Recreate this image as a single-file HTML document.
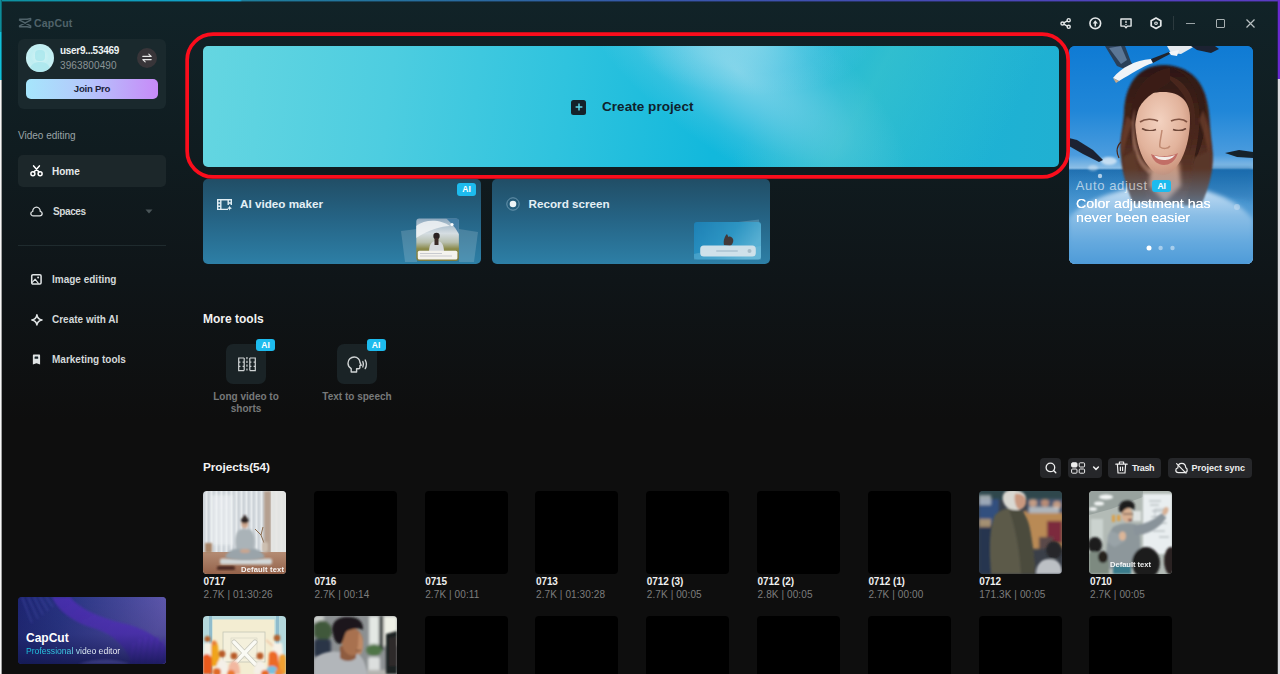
<!DOCTYPE html>
<html>
<head>
<meta charset="utf-8">
<title>CapCut</title>
<style>
*{box-sizing:border-box;margin:0;padding:0}
html,body{width:1280px;height:674px;overflow:hidden}
body{font-family:"Liberation Sans",sans-serif;color:#fff;position:relative;
background:linear-gradient(180deg,#112328 0px,#101c20 150px,#0f1518 280px,#0e0e0e 420px,#0e0e0e 674px);}
.a{position:absolute}
.b{font-weight:bold}
svg{position:absolute;overflow:visible}
/* frame strips */
#top{left:0;top:0;width:1280px;height:2px;background:linear-gradient(90deg,#0e909e 0,#0f9cb8 120px,#12a8d6 240px,#1d7f9c 242px,#2a6aa0 480px,#3758aa 650px,#4a48b8 1000px,#5b3cc4 1280px);}
#top2{left:0;top:1px;width:1280px;height:1px;background:rgba(16,30,36,.55)}
#lt{left:0;top:0;width:2px;height:79.5px;background:linear-gradient(90deg,#10c0d8 0,#10c0d8 55%,rgba(10,40,50,.85) 100%)}
#lt2{left:0;top:0;width:2px;height:32px;background:linear-gradient(90deg,#0d8c98 0,#0d8c98 55%,rgba(10,40,50,.85) 100%)}
#lb{left:0;top:79.5px;width:2px;height:595px;background:linear-gradient(90deg,#f6f6f6 0,#f6f6f6 55%,rgba(60,60,60,.8) 100%)}
#rt{left:1277px;top:0;width:3px;height:79px;background:linear-gradient(90deg,rgba(60,30,130,0) 0,rgba(80,35,170,.6) 30%,#6a2ad0 40%,#6a2ad0 100%)}
#rb{left:1277px;top:79px;width:3px;height:595px;background:linear-gradient(90deg,rgba(90,90,90,0) 0,rgba(150,150,150,.6) 30%,#dcdce0 40%,#dcdce0 100%)}
/* sidebar */
#logo{left:34px;top:16.5px;font-size:10.5px;font-weight:bold;color:#50636a;letter-spacing:.2px}
#ucard{left:18px;top:39px;width:148px;height:70px;border-radius:6px;background:#1a292d}
#avatar{left:26px;top:44px;width:28px;height:28px;border-radius:50%;background:radial-gradient(circle at 50% 45%,#d9f4f6 0,#bfeef2 45%,#c9f0f3 70%,#e9fafa 100%);overflow:hidden}
#uname{left:60px;top:45px;font-size:10px;font-weight:bold;color:#eef2f3;letter-spacing:-.3px}
#uid{left:60px;top:59.5px;font-size:10px;color:#8b9497;letter-spacing:.1px}
#swap{left:137px;top:48px;width:20px;height:20px;border-radius:50%;background:#383539}
#joinpro{left:26px;top:79px;width:132px;height:20px;border-radius:5px;background:linear-gradient(90deg,#a6e6fc 0,#b4c8fb 45%,#c78af8 100%);color:#1c1f3a;font-size:9.6px;font-weight:bold;letter-spacing:-.25px;text-align:center;line-height:20px}
.sec{left:18px;font-size:10px;color:#9aa4a7}
#home{left:18px;top:155px;width:148px;height:32px;border-radius:5px;background:#1c272a}
.nav{font-size:10px;font-weight:bold;color:#e6eaeb}
#sep{left:18px;top:245px;width:148px;height:1px;background:#1f2b2e}
#promo{left:18px;top:597px;width:148px;height:67px;border-radius:4px;overflow:hidden;background:linear-gradient(100deg,#1a1f66 0,#27307c 40%,#4a4a9c 75%,#5f57a8 100%)}

/* main */
#banner{left:203px;top:46px;width:856px;height:121px;border-radius:5px;overflow:hidden;
background:
linear-gradient(118deg,rgba(60,200,200,0) 64%,rgba(70,200,200,.5) 75%,rgba(60,196,204,.3) 84%,rgba(60,200,200,0) 92%),
linear-gradient(97deg,#65d6e1 0%,#4dcde0 22%,#2fc3de 42%,#12b8dc 60%,#1bb4d6 80%,#20b0d2 100%)}
#sheen{left:335px;top:-55px;width:400px;height:160px;transform:rotate(36deg);background:radial-gradient(ellipse closest-side,rgba(165,222,238,.72) 0,rgba(150,216,236,.5) 35%,rgba(130,210,232,.2) 70%,rgba(120,210,232,0) 100%)}
#sheen2{left:430px;top:-60px;width:240px;height:110px;background:radial-gradient(ellipse closest-side,rgba(176,226,240,.5) 0,rgba(150,216,236,.2) 60%,rgba(120,210,232,0) 100%)}
#redbox{left:185.3px;top:32.25px;width:884.7px;height:146.55px;border:3.7px solid #fb0d1c;border-radius:28px}
#cplus{left:571px;top:99.5px;width:15px;height:15px;border-radius:2.5px;background:#14222a}
#ctext{left:602px;top:99.2px;font-size:13.5px;font-weight:bold;color:#10222c;letter-spacing:.05px}
.card{top:179px;height:85px;border-radius:5px;background:linear-gradient(180deg,#214e66 0,#256384 45%,#2d7fa6 100%);overflow:hidden}
.ctitle{font-size:11.7px;font-weight:bold;color:#e4f0f6;top:197px}
.ai{width:19px;height:12.5px;border-radius:3px;background:#1dbbee;color:#fff;font-size:8.5px;font-weight:bold;text-align:center;line-height:12.5px}
.h2{font-size:12px;font-weight:bold;color:#f2f2f2}
.tile{top:344px;width:40px;height:40px;border-radius:7px;background:#1a2326}
.tlabel{font-size:10px;font-weight:bold;color:#77797a;text-align:center;line-height:12px;top:391px}
.btn{top:457.5px;height:20.5px;border-radius:4px;background:#26272a}
.btxt{font-size:9px;font-weight:bold;color:#eee;top:462.5px}
.th{width:83px;height:83px;border-radius:4px;background:#000;overflow:hidden}
.pt{font-size:10px;font-weight:bold;color:#efefef;letter-spacing:-.1px;margin-left:.6px}
.ps{font-size:10px;color:#7d7d7d;letter-spacing:.1px;margin-left:.6px}
#hero{left:1069px;top:46px;width:184px;height:218px;border-radius:6px;overflow:hidden;background:linear-gradient(180deg,#157fd6 0,#3a93dc 45%,#62a8e0 100%)}
</style>
</head>
<body>
<!-- frame -->
<div class="a" id="top"></div><div class="a" id="top2"></div>
<div class="a" id="lt"></div><div class="a" id="lt2"></div><div class="a" id="lb"></div>
<div class="a" id="rt"></div><div class="a" id="rb"></div>

<!-- SIDEBAR -->
<svg style="left:18px;top:18px" width="14" height="10" viewBox="0 0 14 10"><path d="M1.2 1.2H9.2L12.6 0.4V2.2L1.6 7.8V8.8H9.2L12.6 9.6V7.8L1.6 2.2V1.2" fill="none" stroke="#50636a" stroke-width="1.5" stroke-linejoin="round"/></svg>
<div class="a" id="logo">CapCut</div>
<div class="a" id="ucard"></div>
<div class="a" id="avatar"><svg style="left:0;top:0" width="28" height="28" viewBox="0 0 28 28"><rect x="9" y="6" width="10" height="11" rx="4" fill="#a8e6ec" opacity=".8"/><path d="M3 28C4 20 9 18 14 18S24 20 25 28Z" fill="#a8e6ec" opacity=".75"/></svg></div>
<div class="a" id="uname">user9...53469</div>
<div class="a" id="uid">3963800490</div>
<div class="a" id="swap"><svg style="left:5px;top:5px" width="10" height="10" viewBox="0 0 10 10"><path d="M0.8 3.4H9.2L6.8 1.2M9.2 6.6H0.8L3.2 8.8" fill="none" stroke="#e8e8e8" stroke-width="1.1" stroke-linecap="round" stroke-linejoin="round"/></svg></div>
<div class="a" id="joinpro">Join Pro</div>

<div class="a sec" style="top:130px">Video editing</div>
<div class="a" id="home"></div>
<div class="a nav" style="left:52px;top:165.8px">Home</div>
<div class="a nav" style="left:53px;top:205.6px;color:#d4d9da;letter-spacing:-.4px">Spaces</div>
<div class="a" id="sep"></div>
<div class="a nav" style="left:52px;top:273.7px;color:#d4d9da">Image editing</div>
<div class="a nav" style="left:52px;top:313.7px;color:#d4d9da">Create with AI</div>
<div class="a nav" style="left:52px;top:354px;color:#d4d9da">Marketing tools</div>

<div class="a" id="promo">
<svg style="left:0;top:0" width="148" height="67" viewBox="0 0 148 67">
<defs><linearGradient id="pg" x1="0" y1="0" x2="1" y2=".25"><stop offset="0" stop-color="#1d2470"/><stop offset=".35" stop-color="#2a3684"/><stop offset=".7" stop-color="#46489a"/><stop offset="1" stop-color="#625aae"/></linearGradient>
<linearGradient id="pd" x1="0" y1="0" x2="0" y2="1"><stop offset="0" stop-color="#141a58" stop-opacity="0"/><stop offset=".55" stop-color="#141a58" stop-opacity=".25"/><stop offset="1" stop-color="#12164e" stop-opacity=".85"/></linearGradient>
<linearGradient id="pr" x1="0" y1="0" x2="1" y2="1"><stop offset="0" stop-color="#4a2cb0"/><stop offset=".5" stop-color="#5a34c4"/><stop offset="1" stop-color="#5a30c8"/></linearGradient></defs>
<rect width="148" height="67" fill="url(#pg)"/>
<g filter="url(#f1)">
<path d="M34 0C40 14 56 26 78 32C96 38 108 50 114 67H148V50C140 40 124 30 104 26C80 20 62 12 52 0Z" fill="url(#pr)" opacity=".85"/>
<path d="M4 0L14 26M10 0L20 22M16 0L25 18M22 0L30 14M28 0L35 10" stroke="#3c44a0" stroke-width="1.6" opacity=".7"/>
<path d="M112 67L116 46M118 67L122 42M124 67L128 40M130 67L134 40M136 67L140 40M142 67L146 42" stroke="#6a3ad8" stroke-width="2.2" opacity=".75"/>
</g>
<rect width="148" height="67" fill="url(#pd)"/>
<path d="M60 67C80 60 100 62 112 67Z" fill="#4a4a90" opacity=".6" filter="url(#f1)"/>
</svg>
<div class="a" style="left:8px;top:33.5px;font-size:12px;font-weight:bold;color:#fff">CapCut</div>
<div class="a" style="left:8px;top:48.5px;font-size:8.6px;white-space:nowrap;background:linear-gradient(90deg,#18c4e0 0,#3fd0e6 45%,#e8f6fa 60%,#fff 100%);-webkit-background-clip:text;background-clip:text;color:transparent">Professional video editor</div>
</div>


<!-- nav icons -->
<svg style="left:30px;top:165px" width="13" height="12" viewBox="0 0 13 12"><g fill="none" stroke="#fff" stroke-width="1.5" stroke-linecap="round"><circle cx="2.9" cy="8.7" r="2"/><circle cx="10.1" cy="8.7" r="2"/><path d="M3.6 0.9L9 7M9.4 0.9L4 7"/></g></svg>
<svg style="left:30px;top:205.5px" width="13" height="11.2" viewBox="0 0 14 12"><path d="M3.6 10.6C1.9 10.6 0.9 9.4 0.9 8.1C0.9 6.9 1.8 6 2.9 5.8C3 3.3 4.7 1.1 7 1.1C9.3 1.1 11 3.3 11.1 5.8C12.2 6 13.1 6.9 13.1 8.1C13.1 9.4 12.1 10.6 10.4 10.6Z" fill="none" stroke="#dfe3e4" stroke-width="1.4" stroke-linejoin="round"/></svg>
<svg style="left:144.5px;top:208.5px" width="8" height="5" viewBox="0 0 8 5"><path d="M0.5 0.5H7.5L4 4.5Z" fill="#4a5558"/></svg>
<svg style="left:31.2px;top:273.6px" width="10.8" height="10.8" viewBox="0 0 12 12"><rect x="0.8" y="0.8" width="10.4" height="10.4" rx="1.4" fill="none" stroke="#dfe3e4" stroke-width="1.7"/><circle cx="7.9" cy="4" r="1.1" fill="#dfe3e4"/><path d="M1.2 9.6L4.6 5.8L8.4 10.6" fill="none" stroke="#dfe3e4" stroke-width="1.3" stroke-linejoin="round"/></svg>
<svg style="left:30.6px;top:313.8px" width="11.8" height="11.8" viewBox="0 0 13 13"><path d="M6.5 0.9C7 4.2 8.8 6 12.1 6.5C8.8 7 7 8.8 6.5 12.1C6 8.8 4.2 7 0.9 6.5C4.2 6 6 4.2 6.5 0.9Z" fill="none" stroke="#dfe3e4" stroke-width="1.7" stroke-linejoin="round"/></svg>
<svg style="left:32.4px;top:353.8px" width="8.6" height="11.2" viewBox="0 0 10 12" preserveAspectRatio="none"><path d="M1 1.6C1 1 1.5 0.5 2.1 0.5H8.4C9 0.5 9.4 1 9.4 1.6V11.3L5.2 9.9L1 11.3Z" fill="#dfe3e4"/><rect x="3" y="2.6" width="4.2" height="2.6" rx=".5" fill="#142126"/></svg>

<!-- TOPBAR -->
<svg style="left:1059.8px;top:17.9px" width="11.2" height="11" viewBox="0 0 12 12"><g fill="none" stroke="#e4e8e9" stroke-width="1.5"><circle cx="2.6" cy="6" r="1.7"/><circle cx="9.4" cy="2.4" r="1.7"/><circle cx="9.4" cy="9.6" r="1.7"/><path d="M4.1 5.2L7.9 3.2M4.1 6.8L7.9 8.8"/></g></svg>
<svg style="left:1089.2px;top:16.7px" width="12.6" height="12.6" viewBox="0 0 12 12"><circle cx="6" cy="6" r="5.1" fill="none" stroke="#e4e8e9" stroke-width="1.55"/><path d="M6 9V4.4" stroke="#e4e8e9" stroke-width="1.5"/><path d="M3.6 6.2L6 3.2L8.4 6.2Z" fill="#e4e8e9"/></svg>
<svg style="left:1119.7px;top:17.8px" width="12" height="11.6" viewBox="0 0 13 13" preserveAspectRatio="none"><path d="M1 1.1H12V9.1H8L6.5 10.9L5 9.1H1Z" fill="none" stroke="#e4e8e9" stroke-width="1.55" stroke-linejoin="round"/><path d="M6.5 3V5.6" stroke="#e4e8e9" stroke-width="1.4"/><circle cx="6.5" cy="7.2" r=".8" fill="#e4e8e9"/></svg>
<svg style="left:1150px;top:16.9px" width="12" height="12.5" viewBox="0 0 13 14" preserveAspectRatio="none"><path d="M6.5 1.2L11.7 4.1V9.9L6.5 12.8L1.3 9.9V4.1Z" fill="none" stroke="#e4e8e9" stroke-width="1.9" stroke-linejoin="round"/><circle cx="6.5" cy="7" r="1.4" fill="none" stroke="#e4e8e9" stroke-width="1.3"/></svg>
<div class="a" style="left:1173px;top:16px;width:1px;height:14px;background:#2c3a3e"></div>
<div class="a" style="left:1186px;top:22.6px;width:9px;height:1.2px;background:#9aa3a6"></div>
<div class="a" style="left:1216px;top:19px;width:9px;height:9px;border:1.2px solid #a8b0b2;border-radius:1px"></div>
<svg style="left:1246px;top:18.5px" width="9" height="9" viewBox="0 0 9 9"><path d="M0.5 0.5L8.5 8.5M8.5 0.5L0.5 8.5" stroke="#b8c0c2" stroke-width="1.2"/></svg>


<!-- MAIN -->
<div class="a" id="hero">
<svg style="left:0;top:0" width="184" height="218" viewBox="0 0 184 218">
<defs>
<linearGradient id="sky" x1="0" y1="0" x2="0" y2="1"><stop offset="0" stop-color="#0f7bd4"/><stop offset=".3" stop-color="#2187d8"/><stop offset=".5" stop-color="#4b9cde"/><stop offset=".56" stop-color="#8dbfe6"/><stop offset=".57" stop-color="#1f6fb0"/><stop offset=".68" stop-color="#2a7fc0"/><stop offset="1" stop-color="#4f9cd8"/></linearGradient>
<linearGradient id="ov" x1="0" y1="0" x2="0" y2="1"><stop offset="0" stop-color="#5aa4dc" stop-opacity="0"/><stop offset=".56" stop-color="#5aa4dc" stop-opacity="0"/><stop offset=".68" stop-color="#66aade" stop-opacity=".35"/><stop offset=".78" stop-color="#66aade" stop-opacity=".72"/><stop offset=".9" stop-color="#5ba4dc" stop-opacity=".93"/><stop offset="1" stop-color="#4e9bd8" stop-opacity="1"/></linearGradient>
<linearGradient id="hairg" x1="0" y1="0" x2="0" y2="1"><stop offset="0" stop-color="#2c1712"/><stop offset=".5" stop-color="#4a271c"/><stop offset="1" stop-color="#6b4434"/></linearGradient>
<radialGradient id="skin" cx=".45" cy=".35" r=".7"><stop offset="0" stop-color="#f3d2c0"/><stop offset=".6" stop-color="#e2b39c"/><stop offset="1" stop-color="#c48c74"/></radialGradient>
<filter id="b1" x="-20%" y="-20%" width="140%" height="140%"><feGaussianBlur stdDeviation="1"/></filter>
<filter id="b2" x="-20%" y="-20%" width="140%" height="140%"><feGaussianBlur stdDeviation="2"/></filter>
<filter id="b05" x="-20%" y="-20%" width="140%" height="140%"><feGaussianBlur stdDeviation=".6"/></filter>
</defs>
<rect width="184" height="218" fill="url(#sky)"/>
<path d="M120 122H184V156C160 150 140 150 120 152Z" fill="#1868aa" opacity=".75" filter="url(#b2)"/>
<!-- clouds/lights -->
<ellipse cx="40" cy="115" rx="8" ry="4" fill="#dbeaf6" opacity=".8" filter="url(#b1)"/>
<ellipse cx="24" cy="122" rx="5" ry="3" fill="#dbeaf6" opacity=".5" filter="url(#b1)"/>
<!-- gull 1 -->
<g filter="url(#b05)">
<path d="M36 0L56 0L62 16L66 22L58 24L48 20Z" fill="#2c3f58"/>
<path d="M40 2L52 0L58 14L52 18Z" fill="#5b7796"/>
<path d="M44 32C52 22 66 14 82 13L84 17C74 20 62 28 50 35Z" fill="#f1f4f7"/>
<path d="M82 13L100 6L101 8L84 17Z" fill="#20242c"/>
<path d="M44 32L50 35L47 37Z" fill="#c9a98a"/>
</g>
<!-- gull 2 -->
<g filter="url(#b05)">
<path d="M98 0H126L112 8L102 7Z" fill="#e4e9ee"/>
<path d="M100 6L110 4L108 10L102 9Z" fill="#f3f5f7"/>
<path d="M122 0H146L150 3L142 7L128 4Z" fill="#1c2430"/>
</g>
<!-- dark wings -->
<path d="M0 92L8 94L24 104L34 114L30 116L14 108L0 100Z" fill="#1b2430" filter="url(#b05)"/>
<path d="M156 107L170 104L184 106V112L168 111Z" fill="#16202c" filter="url(#b05)"/>
<!-- blouse -->
<path d="M0 218V172C14 156 40 146 70 141L120 141C150 146 172 158 184 174V218Z" fill="#e2eefa" filter="url(#b2)"/>
<!-- hair back -->
<path d="M96 19C70 18 56 38 55 66C54 84 50 96 52 112C53 126 58 142 64 156L132 158C140 140 146 120 143 100C140 82 142 66 136 48C130 30 116 20 96 19Z" fill="url(#hairg)" filter="url(#b1)"/>
<!-- neck -->
<path d="M82 116H110L112 140L96 156L80 140Z" fill="#c99880" filter="url(#b2)"/>
<!-- face -->
<path d="M66 70C66 54 76 46 94 46C112 46 121 56 121 72C121 86 119 100 112 114C106 124 100 129 94 129C87 129 80 123 74 112C68 100 66 84 66 70Z" fill="url(#skin)" filter="url(#b05)"/>
<!-- hair front strands -->
<path d="M101 22C84 24 66 38 62 64C61 76 60 88 62 100C66 84 66 72 70 62C76 50 90 44 101 36Z" fill="#3a1f17" filter="url(#b05)"/>
<path d="M101 22C116 26 128 40 130 62C132 80 128 100 124 118C132 104 138 84 136 62C134 40 122 24 101 22Z" fill="#341b14" filter="url(#b05)"/>
<path d="M101 34C110 42 120 52 122 72C124 86 122 98 120 108C126 92 128 72 124 56C120 42 112 34 101 30Z" fill="#4a281c" filter="url(#b05)"/>
<path d="M58 70C54 84 50 96 54 110C56 96 60 86 64 76Z" fill="#6b3d2a" opacity=".8" filter="url(#b1)"/>
<path d="M134 64C140 80 144 96 140 112C138 98 134 84 130 74Z" fill="#6b3d2a" opacity=".8" filter="url(#b1)"/>
<path d="M52 96C48 100 47 106 50 112" stroke="#4a281c" stroke-width="1.2" fill="none" filter="url(#b05)"/>
<path d="M66 62C64 80 66 100 72 112C76 118 80 122 84 124L80 128C72 122 66 112 64 100C62 88 62 74 66 62Z" fill="#c99a84" opacity=".5" filter="url(#b1)"/>
<!-- brows, eyes -->
<path d="M71 76C76 72.5 84 72.5 89 75" stroke="#6f4232" stroke-width="1.7" fill="none" opacity=".85" filter="url(#b05)"/>
<path d="M102 75C107 72.5 114 72.5 118 76" stroke="#6f4232" stroke-width="1.7" fill="none" opacity=".85" filter="url(#b05)"/>
<path d="M73 82.5C77 85 83 85 87 83.5" stroke="#5a3428" stroke-width="1.5" fill="none" opacity=".85" filter="url(#b05)"/>
<path d="M104 83.5C108 85 113 85 117 82.5" stroke="#5a3428" stroke-width="1.5" fill="none" opacity=".85" filter="url(#b05)"/>
<!-- nose -->
<path d="M93 84C92 92 90 98 91 101C94 103 99 103 101 100" stroke="#c08a72" stroke-width="1.5" fill="none" filter="url(#b05)"/>
<!-- mouth -->
<path d="M82 108C88 111 102 111 109 107C106 116 100 119 95 119C89 119 84 115 82 108Z" fill="#c26e66" filter="url(#b05)"/>
<path d="M85 109.5C91 111.5 101 111.5 106 109C103 113 99 114 95 114C91 114 87 112.5 85 109.5Z" fill="#f4ece8"/>
<!-- hair lower fade -->
<path d="M54 112C56 130 60 146 66 160L78 150C72 138 68 124 66 104Z" fill="#5f3a2c" opacity=".9" filter="url(#b1)"/>
<path d="M124 112C124 130 120 146 114 160L132 158C140 140 144 124 142 104Z" fill="#5a382c" opacity=".9" filter="url(#b1)"/>
<!-- overlay -->
<rect width="184" height="218" fill="url(#ov)"/>
<!-- bokeh -->
<circle cx="31" cy="130" r="2.2" fill="#cfe2f3" opacity=".8"/>
<circle cx="168" cy="161" r="3" fill="#cfe2f3" opacity=".5" filter="url(#b05)"/>
<circle cx="80" cy="202" r="2.5" fill="#fff"/>
<circle cx="91.6" cy="202" r="2.2" fill="#fff" opacity=".45"/>
<circle cx="103.5" cy="202" r="2.2" fill="#fff" opacity=".45"/>
</svg>
<div class="a" style="left:6.8px;top:132.4px;font-size:13px;letter-spacing:.62px;color:rgba(255,255,255,.62);white-space:nowrap">Auto adjust</div>
<div class="a ai" style="left:83px;top:133.8px;width:19.4px;height:12.2px;line-height:12.2px">AI</div>
<div class="a" style="left:6.8px;top:152.4px;font-size:12.5px;line-height:13.3px;color:#fff;text-shadow:0 0 .6px rgba(255,255,255,.9);white-space:nowrap;transform:scaleX(1.14);transform-origin:0 0">Color adjustment has<br>never been easier</div>
</div>
<div class="a" id="banner"><div class="a" id="sheen"></div><div class="a" id="sheen2"></div></div>
<div class="a" id="cplus"><svg style="left:3.5px;top:3.5px" width="8" height="8" viewBox="0 0 8 8"><path d="M4 0.6V7.4M0.6 4H7.4" stroke="#59d3e6" stroke-width="1.5"/></svg></div>
<div class="a" id="ctext">Create project</div>

<div class="a card" id="card1" style="left:203px;width:278px"></div>
<div class="a card" id="card2" style="left:492px;width:278px"></div>
<div class="a ctitle" style="left:240px">AI video maker</div>
<div class="a ctitle" style="left:528.5px">Record screen</div>
<div class="a ai" style="left:457px;top:183px">AI</div>


<!-- card icons -->
<svg style="left:217px;top:198.5px" width="16" height="12" viewBox="0 0 16 12"><g fill="none" stroke="#e0edf3" stroke-width="1.4"><path d="M11 10.4H0.7V0.7H14.3V6"/><path d="M3.8 0.7V10.4M11.2 0.7V6"/><path d="M0.7 4H3.8M0.7 7.2H3.8M11.2 4H14.3"/></g><path d="M12.6 6.6C12.9 8.3 13.5 8.9 15.2 9.2C13.5 9.5 12.9 10.1 12.6 11.8C12.3 10.1 11.7 9.5 10 9.2C11.7 8.9 12.3 8.3 12.6 6.6Z" fill="#e0edf3"/></svg>
<svg style="left:506px;top:197px" width="14" height="14" viewBox="0 0 14 14"><circle cx="7" cy="7" r="6.2" fill="none" stroke="#7fa8bf" stroke-width="1" opacity=".75"/><circle cx="7" cy="7" r="3.3" fill="#eef4f7"/></svg>
<!-- card thumbs -->
<svg style="left:398px;top:214px" width="84" height="50" viewBox="0 0 84 50">
<path d="M3 17L19 15V48H7Z" fill="#fff" opacity=".16"/><path d="M61 15L80 18L76 48H61Z" fill="#fff" opacity=".16"/>
<defs><clipPath id="c1"><rect x="18.3" y="4.5" width="42.6" height="42.6" rx="3"/></clipPath><linearGradient id="g1" x1="0" y1="0" x2="0" y2="1"><stop offset="0" stop-color="#8aa6bc"/><stop offset=".35" stop-color="#d5dde2"/><stop offset=".55" stop-color="#b9c0b0"/><stop offset=".7" stop-color="#8b8a4a"/><stop offset="1" stop-color="#7c7a3c"/></linearGradient>
<filter id="tb" x="-20%" y="-20%" width="140%" height="140%"><feGaussianBlur stdDeviation=".7"/></filter></defs>
<g clip-path="url(#c1)"><rect x="18" y="4" width="44" height="44" fill="url(#g1)"/>
<path d="M18 12C28 4 44 6 52 12C44 12 30 16 18 24Z" fill="#eef1f3" opacity=".9" filter="url(#tb)"/>
<path d="M48 4H62V22C58 14 54 10 48 4Z" fill="#2f6f9c" opacity=".8" filter="url(#tb)"/>
<circle cx="54" cy="10.5" r="1.6" fill="#fff"/>
<circle cx="38.5" cy="22" r="3.2" fill="#2a2420" filter="url(#tb)"/>
<path d="M31 38C31 30 34 27 38.5 27S46 30 46 38Z" fill="#d7dadd" filter="url(#tb)"/>
<rect x="36.5" y="24" width="4" height="7" fill="#3a2c26" filter="url(#tb)"/>
</g>
<rect x="19.8" y="36.8" width="39.6" height="8.8" rx="1.6" fill="#f4f3ee"/><rect x="22" y="39" width="22" height="1" fill="#c9cbd0"/><rect x="22" y="41.5" width="32" height="1" fill="#c9cbd0"/>
</svg>
<svg style="left:690px;top:214px;opacity:.82" width="80" height="50" viewBox="0 0 80 50">
<defs><linearGradient id="g2" x1="0" y1="0" x2="1" y2=".4"><stop offset="0" stop-color="#1c86be"/><stop offset=".6" stop-color="#2f9fcf"/><stop offset="1" stop-color="#62bde0"/></linearGradient></defs>
<path d="M40 9L69 5.5L71 42L40 44Z" fill="#9fd3ea" opacity=".35"/>
<rect x="4" y="8" width="67" height="37.5" rx="3" fill="url(#g2)"/>
<path d="M4 40C20 36 50 36 71 32V45.5H4Z" fill="#8fd0ea" opacity=".35" filter="url(#tb)"/>
<path d="M34 31C33 26 35 22 37 20L38.5 23C40 22 42 23 43 25C44 28 42 31 40 32Z" fill="#4a2e28" filter="url(#tb)"/>
<rect x="10.2" y="31.5" width="55.6" height="11" rx="3.5" fill="#f3f8fb"/><rect x="26" y="36" width="22" height="2" rx="1" fill="#d3dde4"/><circle cx="59.5" cy="37" r="2" fill="#c3cdd4"/>
</svg>
<svg style="left:0;top:0" width="1280" height="200" viewBox="0 0 1280 200"><rect x="187.15" y="34.1" width="881" height="142.85" rx="26" ry="26" fill="none" stroke="#fb0d1c" stroke-width="3.7"/></svg>

<div class="a h2" style="left:203px;top:312px">More tools</div>
<div class="a tile" style="left:226px"></div>
<div class="a tile" style="left:337px"></div>
<div class="a ai" style="left:256px;top:338.5px">AI</div>
<div class="a ai" style="left:366.5px;top:338.5px">AI</div>
<div class="a tlabel" style="left:196px;width:100px">Long video to<br>shorts</div>
<div class="a tlabel" style="left:307px;width:100px">Text to speech</div>

<div class="a h2" style="left:203px;top:459.8px;font-size:11.8px;letter-spacing:-.05px">Projects(54)</div>
<div class="a btn" style="left:1040px;width:21px"></div>
<div class="a btn" style="left:1067.5px;width:34px"></div>
<div class="a btn" style="left:1108px;width:53px"></div>
<div class="a btn" style="left:1168px;width:83.5px"></div>
<div class="a btxt" style="left:1132px;letter-spacing:-.35px">Trash</div>
<div class="a btxt" style="left:1191.5px">Project sync</div>
<!-- tool icons -->
<svg style="left:237.5px;top:356.5px" width="18" height="15" viewBox="0 0 18 15"><g fill="none" stroke="#cfd3d4" stroke-width="1.2"><path d="M6.2 1H0.7V13.6H6.2M6.2 1V13.6M0.7 5.2H2.4M0.7 9.4H2.4M4.6 5.2H6.2M4.6 9.4H6.2"/><path d="M11.8 1H17.3V13.6H11.8M11.8 1V13.6M17.3 5.2H15.6M17.3 9.4H15.6M13.4 5.2H11.8M13.4 9.4H11.8"/><path d="M8.95 0V15" stroke-dasharray="2.2 1.6"/></g></svg>
<svg style="left:346.5px;top:355.5px" width="21" height="18" viewBox="0 0 21 18"><g fill="none" stroke="#cfd3d4" stroke-width="1.4" stroke-linejoin="round" stroke-linecap="round"><path d="M4.2 16V12.6C2.2 11.4 1 9.4 1 7.2C1 3.7 3.8 1 7.2 1C10.6 1 13 3.6 13 6.6L14.2 9.4H12.9V11.4C12.9 12.2 12.3 12.8 11.5 12.8H9.6V16Z"/><path d="M15.8 5.6C16.7 7.3 16.7 9.3 15.8 11"/><path d="M18.2 4C19.8 6.8 19.8 9.8 18.2 12.6"/></g></svg>
<!-- toolbar icons -->
<svg style="left:1044.5px;top:462px" width="12" height="12" viewBox="0 0 12 12"><circle cx="5.4" cy="5.4" r="4.3" fill="none" stroke="#eee" stroke-width="1.3"/><path d="M8.6 8.6L10.8 10.8" stroke="#eee" stroke-width="1.4" stroke-linecap="round"/></svg>
<svg style="left:1070.5px;top:461.5px" width="30" height="12" viewBox="0 0 30 12"><rect x="0.6" y="0.8" width="5.4" height="4.2" rx="1" fill="#eee" stroke="#eee" stroke-width="1"/><rect x="8.2" y="0.8" width="5.4" height="4.2" rx="1" fill="none" stroke="#eee" stroke-width="1"/><rect x="0.6" y="7" width="5.4" height="4.2" rx="1" fill="none" stroke="#eee" stroke-width="1"/><rect x="8.2" y="7" width="5.4" height="4.2" rx="1" fill="none" stroke="#eee" stroke-width="1"/><path d="M22.6 5L25 7.4L27.4 5" fill="none" stroke="#eee" stroke-width="1.5" stroke-linecap="round" stroke-linejoin="round"/></svg>
<svg style="left:1115px;top:461px" width="13" height="13" viewBox="0 0 13 13"><g fill="none" stroke="#eee" stroke-width="1.2" stroke-linejoin="round" stroke-linecap="round"><path d="M0.8 3.2H12.2M4.4 3V1H8.6V3M2.4 3.4L3 12H10L10.6 3.4M5.4 6V9.4M7.6 6V9.4"/></g></svg>
<svg style="left:1175px;top:462px" width="13" height="12" viewBox="0 0 13 12"><g fill="none" stroke="#eee" stroke-width="1.2" stroke-linejoin="round" stroke-linecap="round"><path d="M3.4 10.6C1.8 10.6 0.8 9.5 0.8 8.2C0.8 7 1.7 6.1 2.8 6C2.9 3.4 4.6 1.4 6.8 1.4C9 1.4 10.6 3.2 10.7 5.6C11.6 6 12.2 6.9 12.2 8C12.2 9.5 11.2 10.6 9.6 10.6Z"/><path d="M1.6 1.6L11 11.2"/></g></svg>
<!-- PROJECTS -->
<svg width="0" height="0" style="left:0;top:0"><defs>
<filter id="f1" x="-20%" y="-20%" width="140%" height="140%"><feGaussianBlur stdDeviation=".8"/></filter>
<filter id="f2" x="-20%" y="-20%" width="140%" height="140%"><feGaussianBlur stdDeviation="1.6"/></filter>
<pattern id="curt" width="5" height="83" patternUnits="userSpaceOnUse"><rect width="5" height="83" fill="#d9dee2"/><rect x="0" width="1.6" height="83" fill="#cdd3d8"/><rect x="2.8" width="1.2" height="83" fill="#e6eaec"/></pattern>
<linearGradient id="floor" x1="0" y1="0" x2="0" y2="1"><stop offset="0" stop-color="#b48c74"/><stop offset="1" stop-color="#94624a"/></linearGradient>
</defs></svg>

<div class="a th" id="t0" style="left:203.0px;top:491px"><svg style="left:0;top:0" width="83" height="83" viewBox="0 0 83 83">
<rect width="83" height="83" fill="url(#curt)"/>
<rect x="8" y="4" width="22" height="50" fill="#f2f5f7" opacity=".55" filter="url(#f2)"/>
<rect x="61" y="0" width="7" height="64" fill="#b5a090" filter="url(#f1)"/>
<rect x="68" y="0" width="15" height="64" fill="#e6e6e4" opacity=".85"/>
<rect y="61" width="83" height="22" fill="url(#floor)"/>
<rect x="2" y="52" width="7" height="10" fill="#a88468" filter="url(#f1)"/>
<path d="M52 38L58 44L60 36M58 44L61 52" stroke="#8a6a4c" stroke-width="1" fill="none"/>
<rect x="59" y="51" width="6" height="10" rx="2" fill="#cdbfb0" filter="url(#f1)"/>
<rect x="17" y="67.5" width="52" height="6" rx="2" fill="#d2d7d8" filter="url(#f1)"/>
<g filter="url(#f1)">
<path d="M22 66C26 58 34 56 42 58C50 56 58 58 62 66C56 70 28 70 22 66Z" fill="#9aa4aa"/>
<path d="M33 58C31 48 33 40 38 38H46C51 40 53 48 51 58Z" fill="#aab3b8"/>
<ellipse cx="41.8" cy="33" rx="3.4" ry="4.2" fill="#cfa78e"/>
<ellipse cx="41.8" cy="29.4" rx="3.8" ry="2.8" fill="#2a2220"/><circle cx="41.8" cy="26" r="1.8" fill="#2a2220"/>
<ellipse cx="42" cy="60" rx="5" ry="2" fill="#c9a58e"/>
</g>
<rect x="14" y="75" width="18" height="4" rx="1.5" fill="#4c2c20" filter="url(#f1)"/>
<text x="38" y="80.5" font-family="Liberation Sans, sans-serif" font-size="7.6" font-weight="bold" fill="#fff" opacity=".92" textLength="43">Default text</text>
</svg></div>
<div class="a pt" style="left:203.0px;top:576.4px">0717</div>
<div class="a ps" style="left:203.0px;top:589px">2.7K | 01:30:26</div>
<div class="a th" id="t1" style="left:313.8px;top:491px"></div>
<div class="a pt" style="left:313.8px;top:576.4px">0716</div>
<div class="a ps" style="left:313.8px;top:589px">2.7K | 00:14</div>
<div class="a th" id="t2" style="left:424.6px;top:491px"></div>
<div class="a pt" style="left:424.6px;top:576.4px">0715</div>
<div class="a ps" style="left:424.6px;top:589px">2.7K | 00:11</div>
<div class="a th" id="t3" style="left:535.4px;top:491px"></div>
<div class="a pt" style="left:535.4px;top:576.4px">0713</div>
<div class="a ps" style="left:535.4px;top:589px">2.7K | 01:30:28</div>
<div class="a th" id="t4" style="left:646.2px;top:491px"></div>
<div class="a pt" style="left:646.2px;top:576.4px">0712 (3)</div>
<div class="a ps" style="left:646.2px;top:589px">2.7K | 00:05</div>
<div class="a th" id="t5" style="left:757.0px;top:491px"></div>
<div class="a pt" style="left:757.0px;top:576.4px">0712 (2)</div>
<div class="a ps" style="left:757.0px;top:589px">2.8K | 00:05</div>
<div class="a th" id="t6" style="left:867.8px;top:491px"></div>
<div class="a pt" style="left:867.8px;top:576.4px">0712 (1)</div>
<div class="a ps" style="left:867.8px;top:589px">2.7K | 00:00</div>
<div class="a th" id="t7" style="left:978.6px;top:491px"><svg style="left:0;top:0" width="83" height="83" viewBox="0 0 83 83">
<rect width="83" height="83" fill="#3a3f48"/>
<rect width="83" height="9" fill="#2f474c"/>
<g filter="url(#f2)">
<rect x="0" y="8" width="20" height="30" fill="#33507e"/>
<rect x="0" y="4" width="12" height="10" fill="#c8ccd0" opacity=".7"/>
<rect x="44" y="20" width="40" height="38" fill="#b98a54"/>
<rect x="48" y="8" width="36" height="14" fill="#4a5a74"/>
<circle cx="54" cy="12" r="4" fill="#c39c84"/><circle cx="66" cy="12" r="4" fill="#b88c76"/><circle cx="78" cy="14" r="4" fill="#c39c84"/>
<rect x="50" y="16" width="30" height="6" fill="#d8dcdc" opacity=".7"/>
<rect x="0" y="34" width="16" height="49" fill="#27364f"/>
<rect x="0" y="28" width="12" height="8" fill="#c0a070" opacity=".8"/>
<rect x="68" y="30" width="15" height="22" fill="#7c2c3c"/>
<rect x="60" y="46" width="14" height="12" fill="#5a4a4a"/>
</g>
<g filter="url(#f1)">
<path d="M12 83C10 60 10 36 16 24C22 18 30 16 38 18C46 20 50 30 52 44C54 58 56 72 56 83Z" fill="#5c5a49"/>
<path d="M30 18C34 30 40 50 42 83H56C56 70 54 56 52 44C50 30 46 20 38 18Z" fill="#4c4b3d"/>
<path d="M24 10C22 2 28 -2 36 -1C44 0 48 4 47 10C46 16 42 20 36 19C30 19 26 16 24 10Z" fill="#d9d8d2"/>
<path d="M36 3C42 2 47 5 47 10C47 15 44 19 39 18C36 14 35 8 36 3Z" fill="#c9987f"/>
<path d="M57 83C57 74 62 68 70 68C78 68 83 72 83 83Z" fill="#bcc0c4"/>
<ellipse cx="75" cy="59" rx="8" ry="9" fill="#26272c"/>
</g>
</svg></div>
<div class="a pt" style="left:978.6px;top:576.4px">0712</div>
<div class="a ps" style="left:978.6px;top:589px">171.3K | 00:05</div>
<div class="a th" id="t8" style="left:1089.4px;top:491px"><svg style="left:0;top:0" width="83" height="83" viewBox="0 0 83 83">
<rect width="83" height="83" fill="#b3bbb6"/>
<path d="M0 0H54V6L22 18L0 24Z" fill="#98a29e"/>
<g filter="url(#f1)">
<ellipse cx="17" cy="6" rx="7" ry="2.4" fill="#f4f7f6"/><ellipse cx="10" cy="12.5" rx="5" ry="2" fill="#f4f7f6"/><ellipse cx="4" cy="18" rx="4" ry="1.8" fill="#f4f7f6"/>
<rect x="2" y="28" width="12" height="24" fill="#cbd3cf"/>
<rect x="23" y="24" width="3" height="7" fill="#dba04a"/><rect x="28" y="24" width="3.4" height="6" fill="#dba04a"/>
<rect x="44" y="20" width="8" height="10" fill="#dfe3e2"/>
<rect x="54" y="3" width="29" height="60" fill="#e9eef0"/>
<path d="M60 10H72M61 14H70M63 20H76M62 26H74M66 32H78M64 40H76M70 46H80" stroke="#9aa2a6" stroke-width=".9"/>
<rect x="66" y="18" width="10" height="9" fill="none" stroke="#a6aeb2" stroke-width=".7"/>
</g>
<g filter="url(#f1)">
<path d="M18 78C16 60 18 44 24 36C30 32 42 31 48 34C52 40 52 58 50 78Z" fill="#8d979b"/>
<path d="M44 34C54 34 64 30 73 22L77 27C70 38 58 44 46 44Z" fill="#89939a"/>
<ellipse cx="76.5" cy="20" rx="2.6" ry="4" fill="#d8b094" transform="rotate(25 76.5 20)"/>
<path d="M22 40C16 46 18 54 26 56L36 50L33 44Z" fill="#99a3a7"/>
<ellipse cx="33.5" cy="45" rx="3.4" ry="4.6" fill="#dcb698"/>
<ellipse cx="38" cy="24" rx="5.6" ry="7.2" fill="#d9b193"/>
<path d="M30 20C29 12 34 9 39 9.5C45 10 47 14 45 19C42 16 36 16 33 22Z" fill="#1b1b1e"/>
<path d="M34 23H44" stroke="#3a2c28" stroke-width=".8"/>
<ellipse cx="41" cy="29" rx="2" ry="1.2" fill="#8a4a40"/>
<rect x="24" y="74" width="18" height="9" fill="#3b7c8c"/>
<ellipse cx="6" cy="54" rx="7" ry="8" fill="#1e1c1e"/>
<path d="M0 62C6 58 16 62 20 70V83H0Z" fill="#7d8a80"/>
<ellipse cx="14" cy="66" rx="5" ry="6" fill="#27221f"/>
<ellipse cx="57" cy="72" rx="14" ry="16" fill="#1d1a1b"/>
<ellipse cx="82" cy="70" rx="7" ry="14" fill="#2a2422"/>
</g>
<text x="21" y="76.2" font-family="Liberation Sans, sans-serif" font-size="7.6" font-weight="bold" fill="#fff" opacity=".92" textLength="41">Default text</text>
</svg></div>
<div class="a pt" style="left:1089.4px;top:576.4px">0710</div>
<div class="a ps" style="left:1089.4px;top:589px">2.7K | 00:05</div>
<div class="a th" id="u0" style="left:203.0px;top:616px"><svg style="left:0;top:0" width="83" height="83" viewBox="0 0 83 83">
<rect width="83" height="83" fill="#b4d8dc"/>
<rect x="6" y="0" width="3" height="60" fill="#8fbccc"/><rect x="73" y="0" width="3" height="60" fill="#8fbccc"/>
<rect x="9.5" y="3.5" width="62" height="60" fill="#f3edd2"/>
<rect x="20" y="16" width="42" height="30" fill="#f4f0dc" stroke="#c4c6b6" stroke-width=".8"/>
<rect x="28" y="22" width="26" height="20" fill="none" stroke="#d4d4c4" stroke-width=".6"/>
<path d="M31 26L52 48M52 26L31 48" stroke="#c8c8bc" stroke-width="5" stroke-linecap="round"/>
<path d="M31 26L52 48M52 26L31 48" stroke="#fafaf4" stroke-width="3.4" stroke-linecap="round"/>
<g filter="url(#f1)">
<circle cx="4.5" cy="23" r="3" fill="#b4602c"/><path d="M1 27H9L10 44H0Z" fill="#f4f0e4"/>
<path d="M8 30C10 24 14 24 15 30L17 50H8Z" fill="#f0a41c"/><circle cx="11" cy="27" r="2.6" fill="#e8803a"/>
<path d="M0 40C3 36 8 38 9 44V58H0Z" fill="#e85a1e"/>
<circle cx="74" cy="22" r="3.2" fill="#b4602c"/><path d="M70 27H79L81 46H70Z" fill="#f6f2e8"/><path d="M70 30L63 24" stroke="#f0c8a8" stroke-width="1.8"/>
<path d="M76 40C80 36 83 38 83 44V58H76Z" fill="#f0a030"/>
<circle cx="19" cy="38" r="3.4" fill="#b85a28"/><path d="M13 58C13 48 15 43 19 43S25 48 25 58Z" fill="#f4f0e8"/>
<circle cx="31" cy="40" r="3.4" fill="#b85a28"/><path d="M25 58C25 50 27 45 31 45S37 50 37 58Z" fill="#f2b8a0"/>
<circle cx="57" cy="40" r="3.4" fill="#b85a28"/><path d="M51 58C51 50 53 45 57 45S63 50 63 58Z" fill="#f4f0e8"/>
<path d="M66 38C68 34 74 34 75 40L77 58H65Z" fill="#ec6a28"/>
<path d="M63 58C63 52 65 50 69 50S75 52 75 58Z" fill="#78c0e0"/>
<circle cx="14" cy="56" r="4" fill="#e06a28"/><circle cx="28" cy="58" r="4" fill="#ec7a30"/><circle cx="62" cy="58" r="4" fill="#e86a24"/><circle cx="76" cy="57" r="4" fill="#f08a30"/>
</g>
</svg></div>
<div class="a th" id="u1" style="left:313.8px;top:616px"><svg style="left:0;top:0" width="83" height="83" viewBox="0 0 83 83">
<rect width="83" height="83" fill="#8c9092"/>
<g filter="url(#f2)">
<rect x="0" y="0" width="10" height="20" fill="#d0d4d0"/>
<path d="M0 8C6 2 14 4 18 12C20 20 14 26 6 24L0 20Z" fill="#40583a"/>
<rect x="0" y="23" width="17" height="18" rx="4" fill="#2a3446"/>
<rect x="55" y="0" width="11" height="34" fill="#e4e8e4"/><rect x="65" y="0" width="4.5" height="34" fill="#2c3032"/><rect x="69.5" y="0" width="14" height="30" fill="#eef0e6"/>
<ellipse cx="60" cy="34" rx="8" ry="6" fill="#4f7446"/>
<rect x="54" y="41" width="12" height="14" rx="2" fill="#dcdfde"/>
<rect x="52" y="54" width="31" height="6" fill="#b4b4b0"/>
</g>
<g filter="url(#f1)">
<path d="M72 18L83 15V58H72Z" fill="#1e2224"/><path d="M75 22L83 20V50H75Z" fill="#3a3430" opacity=".6"/>
<path d="M0 60V44C4 38 14 34 26 36L44 38C50 42 52 50 54 60Z" fill="#b2b6ba"/>
<path d="M26 30H42V42C38 46 30 46 26 42Z" fill="#8e5c40"/>
<ellipse cx="38.5" cy="26" rx="10.5" ry="13.5" fill="#a8714f"/>
<path d="M45 16C50 22 50 32 47 38C44 40 42 36 44 30Z" fill="#c08a66"/>
<path d="M19 18C16 8 22 1 33 1C44 0 50 6 49 14C44 11 38 13 33 15C30 18 30 24 27 28C22 28 20 24 19 18Z" fill="#1b191b"/>
<path d="M42 34C44 35 46 35 47 34" stroke="#5a3424" stroke-width="1" fill="none"/>
</g>
</svg></div>
<div class="a th" id="u2" style="left:424.6px;top:616px"></div>
<div class="a th" id="u3" style="left:535.4px;top:616px"></div>
<div class="a th" id="u4" style="left:646.2px;top:616px"></div>
<div class="a th" id="u5" style="left:757.0px;top:616px"></div>
<div class="a th" id="u6" style="left:867.8px;top:616px"></div>
<div class="a th" id="u7" style="left:978.6px;top:616px"></div>
<div class="a th" id="u8" style="left:1089.4px;top:616px"></div>


</body>
</html>
